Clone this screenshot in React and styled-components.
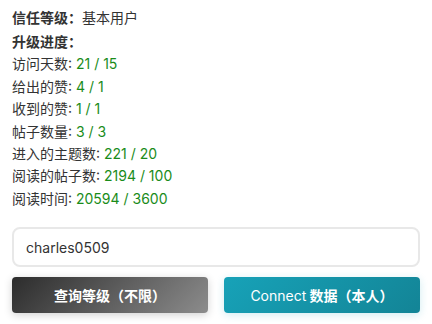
import React, { useState } from 'react';
import styled, { createGlobalStyle } from 'styled-components';

const GlobalStyle = createGlobalStyle`
    html, body {
        margin: 0;
        padding: 0;
        background: #ffffff;
    }
    body {
        font-family: Inter, "Noto Sans CJK SC", sans-serif;
        color: #333333;
    }
`

const Panel = styled.div`
    width: 432px;
    height: 324px;
    box-sizing: border-box;
    padding: 7px 12px 0;
    display: flex;
    flex-direction: column;
`

const InfoList = styled.div`
    display: flex;
    flex-direction: column;
    font-size: 14px;
    line-height: 22.4px;
`

const Row = styled.div`
    margin-bottom: ${props => props.$spaced ? '1.6px' : '0'};
    white-space: nowrap;
`

const Label = styled.span`
    font-weight: ${props => props.$bold ? 700 : 400};
`

const Value = styled.span`
    color: ${props => props.$green ? '#1a8c1a' : '#333333'};
`

const NameInput = styled.input`
    margin-top: 17px;
    height: 40px;
    box-sizing: border-box;
    border: 2px solid #e8e8e8;
    border-radius: 8px;
    padding: 0 12px;
    font-family: Inter, "Noto Sans CJK SC", sans-serif;
    font-size: 14px;
    color: #333333;
    outline: none;
`

const ButtonRow = styled.div`
    margin-top: 10px;
    display: grid;
    grid-template-columns: 1fr 1fr;
    gap: 16px;
`

const ActionButton = styled.button`
    height: 36px;
    border: none;
    border-radius: 4px;
    color: #ffffff;
    font-family: Inter, "Noto Sans CJK SC", sans-serif;
    font-size: 14px;
    font-weight: 700;
    background: ${props => props.$variant === 'info'
        ? 'linear-gradient(135deg, #17a2b8, #138496)'
        : 'linear-gradient(135deg, #2c2c2c, #8c8c8c)'};
    box-shadow: ${props => props.$variant === 'info'
        ? '0 2px 8px rgba(23, 162, 184, 0.2)'
        : '0 2px 8px rgba(0, 0, 0, 0.18)'};
    cursor: pointer;
`

const Connect = styled.span`
    font-weight: 400;
`

const progress = [
    { label: '访问天数', value: '21 / 15' },
    { label: '给出的赞', value: '4 / 1' },
    { label: '收到的赞', value: '1 / 1' },
    { label: '帖子数量', value: '3 / 3' },
    { label: '进入的主题数', value: '221 / 20' },
    { label: '阅读的帖子数', value: '2194 / 100' },
    { label: '阅读时间', value: '20594 / 3600' },
]

function App() {

    const [username, setUsername] = useState('charles0509');

    return (
        <>
            <GlobalStyle />
            <Panel>
                <InfoList>
                    <Row $spaced>
                        <Label $bold>信任等级：</Label>
                        <Value>基本用户</Value>
                    </Row>
                    <Row>
                        <Label $bold>升级进度：</Label>
                    </Row>
                    {progress.map(item => (
                        <Row key={item.label}>
                            <Label>{item.label}: </Label>
                            <Value $green>{item.value}</Value>
                        </Row>
                    ))}
                </InfoList>
                <NameInput
                    type='text'
                    value={username}
                    onChange={e => setUsername(e.target.value)}
                />
                <ButtonRow>
                    <ActionButton>查询等级（不限）</ActionButton>
                    <ActionButton $variant='info'><Connect>Connect</Connect> 数据（本人）</ActionButton>
                </ButtonRow>
            </Panel>
        </>
    )
}

export default App;
